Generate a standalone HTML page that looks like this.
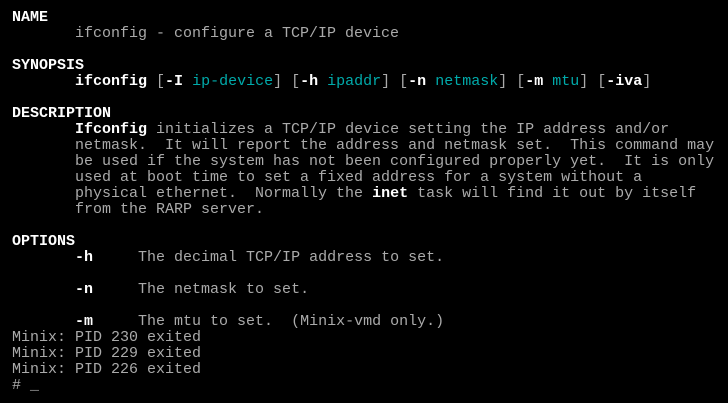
<!DOCTYPE html>
<html><head><meta charset="utf-8"><style>
html,body{margin:0;padding:0;background:#000;width:728px;height:403px;overflow:hidden}
pre{position:absolute;left:12px;top:10px;margin:0;font-family:"Liberation Mono",monospace;font-size:15px;line-height:16px;color:#aaa;letter-spacing:0}
b{color:#fff;font-weight:bold}
.c{color:#0aa}
</style></head><body>
<pre><b>NAME</b>
       ifconfig - configure a TCP/IP device

<b>SYNOPSIS</b>
       <b>ifconfig</b> [<b>-I</b> <span class="c">ip-device</span>] [<b>-h</b> <span class="c">ipaddr</span>] [<b>-n</b> <span class="c">netmask</span>] [<b>-m</b> <span class="c">mtu</span>] [<b>-iva</b>]

<b>DESCRIPTION</b>
       <b>Ifconfig</b> initializes a TCP/IP device setting the IP address and/or
       netmask.  It will report the address and netmask set.  This command may
       be used if the system has not been configured properly yet.  It is only
       used at boot time to set a fixed address for a system without a
       physical ethernet.  Normally the <b>inet</b> task will find it out by itself
       from the RARP server.

<b>OPTIONS</b>
       <b>-h</b>     The decimal TCP/IP address to set.

       <b>-n</b>     The netmask to set.

       <b>-m</b>     The mtu to set.  (Minix-vmd only.)
Minix: PID 230 exited
Minix: PID 229 exited
Minix: PID 226 exited
# _</pre>
</body></html>
